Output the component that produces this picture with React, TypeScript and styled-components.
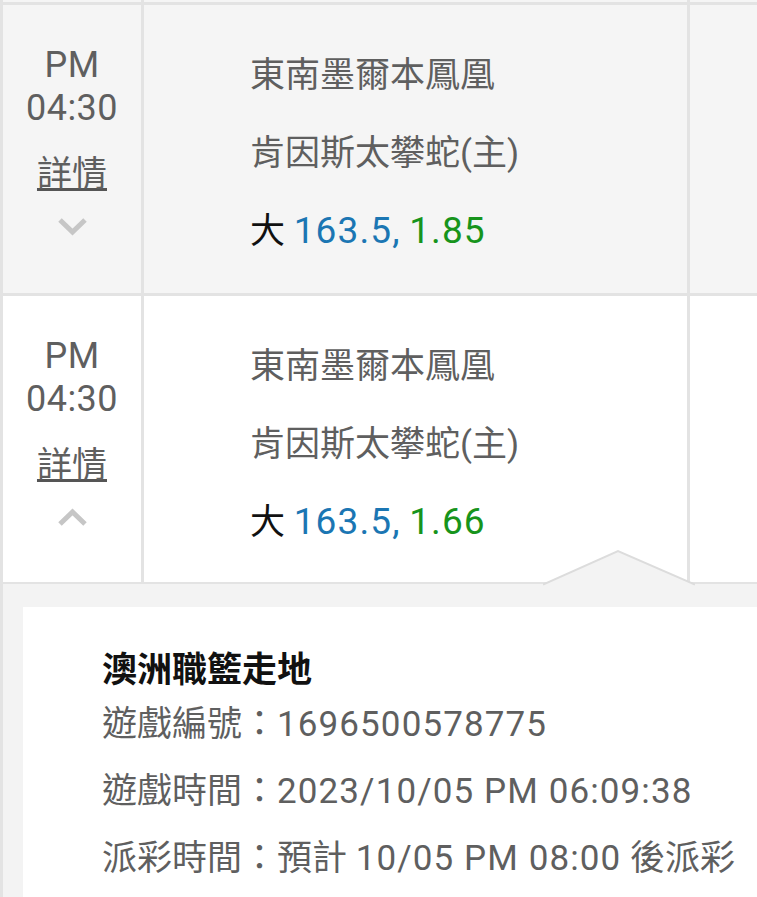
import React from "react";
import styled, { createGlobalStyle } from "styled-components";

const GlobalStyle = createGlobalStyle`
  html, body { margin: 0; padding: 0; background: #ffffff; }
  body {
    font-family: Roboto, "Noto Sans CJK TC", sans-serif;
    overflow: hidden;
  }
`;

const BORDER = "#e3e3e3";

const Page = styled.div`
  width: 757px;
  height: 897px;
  overflow: hidden;
  display: flex;
  flex-direction: column;
  font-size: 35px;
  line-height: 43px;
`;

const Row = styled.div<{ $bg: string; $height: number; $top: number }>`
  display: grid;
  grid-template-columns: 141px 546px 1fr;
  flex: none;
  height: ${(p) => p.$height}px;
  background: ${(p) => p.$bg};
  border-left: 3px solid ${BORDER};
  border-top: ${(p) => p.$top}px solid ${BORDER};
`;

const Cell = styled.div<{ $last?: boolean }>`
  box-sizing: border-box;
  border-right: ${(p) => (p.$last ? "none" : `3px solid ${BORDER}`)};
`;

const TimeCell = styled(Cell)`
  display: flex;
  flex-direction: column;
  align-items: center;
  padding-top: 39px;
  color: #5f5f5f;
`;

const TimeText = styled.div`
  text-align: center;
  font-size: 36px;
  letter-spacing: 0.5px;
`;

const DetailLink = styled.a`
  margin-top: 23px;
  color: #5f5f5f;
  text-decoration: underline;
  text-decoration-color: #555555;
  cursor: pointer;
`;

const Chevron = styled.svg`
  display: block;
  margin-top: 21px;
`;

const TeamCell = styled(Cell)`
  padding: 49px 0 0 106px;
  color: #5f5f5f;
`;

const TeamLine = styled.div`
  white-space: nowrap;
  & + & {
    margin-top: 34.5px;
  }
`;

const OddsKind = styled.span`
  color: #111111;
`;

const OddsValue = styled.span<{ $tone: "line" | "price" }>`
  font-size: 37px;
  letter-spacing: 1.1px;
  color: ${(p) => (p.$tone === "line" ? "#1b76b3" : "#17941c")};
`;

const Latin = styled.span`
  letter-spacing: 1.1px;
`;

const Panel = styled.div`
  position: relative;
  flex: 1;
  display: flex;
  flex-direction: column;
  background: #f3f3f3;
  border-top: 2px solid ${BORDER};
  border-left: 3px solid ${BORDER};
  padding: 23px 0 0 20px;
`;

const Pointer = styled.svg`
  position: absolute;
  top: -35px;
  left: 540px;
  display: block;
`;

const Card = styled.div`
  flex: 1;
  background: #ffffff;
  padding: 42px 0 0 79px;
`;

const Title = styled.div`
  font-weight: 700;
  color: #111111;
`;

const InfoLine = styled.div<{ $gap: number }>`
  margin-top: ${(p) => p.$gap}px;
  color: #5f5f5f;
  white-space: nowrap;
`;

type Bet = {
  time: string[];
  home: string;
  away: string;
  kind: string;
  line: string;
  price: string;
  open: boolean;
  bg: string;
  height: number;
};

const bets: Bet[] = [
  {
    time: ["PM", "04:30"],
    home: "東南墨爾本鳳凰",
    away: "肯因斯太攀蛇(主)",
    kind: "大",
    line: "163.5,",
    price: "1.85",
    open: false,
    bg: "#f5f5f5",
    height: 288,
  },
  {
    time: ["PM", "04:30"],
    home: "東南墨爾本鳳凰",
    away: "肯因斯太攀蛇(主)",
    kind: "大",
    line: "163.5,",
    price: "1.66",
    open: true,
    bg: "#ffffff",
    height: 286,
  },
];

function ChevronIcon({ up }: { up: boolean }) {
  return (
    <Chevron width="31" height="19" viewBox="0 0 31 19">
      <polyline
        points={up ? "3,16 15.5,4 28,16" : "3,3 15.5,15 28,3"}
        fill="none"
        stroke="#c6c6c6"
        strokeWidth="5"
      />
    </Chevron>
  );
}

function BetRow({ bet }: { bet: Bet }) {
  return (
    <Row $bg={bet.bg} $top={3} $height={bet.height}>
      <TimeCell>
        {bet.time.map((t) => (
          <TimeText key={t}>{t}</TimeText>
        ))}
        <DetailLink>詳情</DetailLink>
        <ChevronIcon up={bet.open} />
      </TimeCell>
      <TeamCell>
        <TeamLine>{bet.home}</TeamLine>
        <TeamLine>{bet.away}</TeamLine>
        <TeamLine>
          <OddsKind>{bet.kind} </OddsKind>
          <OddsValue $tone="line">{bet.line}</OddsValue>{" "}
          <OddsValue $tone="price">{bet.price}</OddsValue>
        </TeamLine>
      </TeamCell>
      <Cell $last />
    </Row>
  );
}

export default function App() {
  return (
    <>
      <GlobalStyle />
      <Page>
        <Row $bg="#f5f5f5" $top={0} $height={2}>
          <Cell />
          <Cell />
          <Cell $last />
        </Row>
        {bets.map((b, i) => (
          <BetRow key={i} bet={b} />
        ))}
        <Panel>
          <Pointer width="152" height="37" viewBox="0 0 152 37">
            <polygon points="2,35 75,2 150,35 150,37 2,37" fill="#f3f3f3" />
            <polyline
              points="0,35.5 75,2 152,35.5"
              fill="none"
              stroke="#dcdcdc"
              strokeWidth="2"
            />
          </Pointer>
          <Card>
            <Title>澳洲職籃走地</Title>
            <InfoLine $gap={11}>
              遊戲編號：<Latin>1696500578775</Latin>
            </InfoLine>
            <InfoLine $gap={24}>
              遊戲時間：<Latin>2023/10/05 PM 06:09:38</Latin>
            </InfoLine>
            <InfoLine $gap={24}>
              派彩時間：預計 <Latin>10/05 PM 08:00</Latin> 後派彩
            </InfoLine>
          </Card>
        </Panel>
      </Page>
    </>
  );
}
